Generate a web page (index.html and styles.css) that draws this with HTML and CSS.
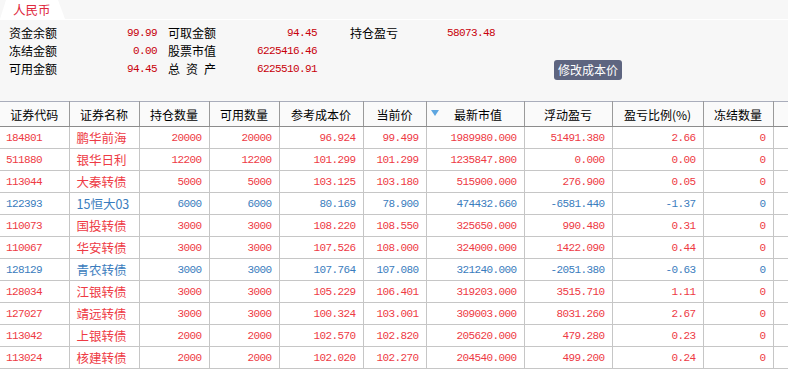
FILE: index.html
```html
<!DOCTYPE html>
<html lang="zh-CN">
<head>
<meta charset="utf-8">
<title>人民币</title>
<link rel="stylesheet" href="styles.css">
</head>
<body>
<div class="panel">
  <div class="tabbar"><div class="tab">人民币</div></div>
  <div class="summary">
    <span class="lbl">资金余额</span><span class="val">99.99</span>
    <span class="lbl l2">可取金额</span><span class="val">94.45</span>
    <span class="lbl l3">持仓盈亏</span><span class="val left">58073.48</span><span></span>
    <span class="lbl">冻结金额</span><span class="val">0.00</span>
    <span class="lbl l2">股票市值</span><span class="val">6225416.46</span>
    <span></span><span></span><span></span>
    <span class="lbl">可用金额</span><span class="val">94.45</span>
    <span class="lbl l2"><span class="spread">总 资 产</span></span><span class="val">6225510.91</span>
    <span></span><span></span><button class="btn">修改成本价</button>
  </div>
</div>
<table class="grid">
  <colgroup>
    <col class="c1"><col class="c2"><col class="c3"><col class="c4"><col class="c5">
    <col class="c6"><col class="c7"><col class="c8"><col class="c9"><col class="c10"><col>
  </colgroup>
  <thead>
    <tr>
      <th>证券代码</th><th>证券名称</th><th>持仓数量</th><th>可用数量</th><th>参考成本价</th>
      <th>当前价</th><th class="sorted"><span class="tri"></span>最新市值</th><th>浮动盈亏</th><th>盈亏比例(%)</th><th>冻结数量</th><th class="fill"></th>
    </tr>
  </thead>
  <tbody>
    <tr class="up"><td class="code">184801</td><td class="name">鹏华前海</td><td>20000</td><td>20000</td><td>96.924</td><td>99.499</td><td>1989980.000</td><td>51491.380</td><td>2.66</td><td>0</td><td class="fill"></td></tr>
    <tr class="up"><td class="code">511880</td><td class="name">银华日利</td><td>12200</td><td>12200</td><td>101.299</td><td>101.299</td><td>1235847.800</td><td>0.000</td><td>0.00</td><td>0</td><td class="fill"></td></tr>
    <tr class="up"><td class="code">113044</td><td class="name">大秦转债</td><td>5000</td><td>5000</td><td>103.125</td><td>103.180</td><td>515900.000</td><td>276.900</td><td>0.05</td><td>0</td><td class="fill"></td></tr>
    <tr class="down"><td class="code">122393</td><td class="name">15恒大03</td><td>6000</td><td>6000</td><td>80.169</td><td>78.900</td><td>474432.660</td><td>-6581.440</td><td>-1.37</td><td>0</td><td class="fill"></td></tr>
    <tr class="up"><td class="code">110073</td><td class="name">国投转债</td><td>3000</td><td>3000</td><td>108.220</td><td>108.550</td><td>325650.000</td><td>990.480</td><td>0.31</td><td>0</td><td class="fill"></td></tr>
    <tr class="up"><td class="code">110067</td><td class="name">华安转债</td><td>3000</td><td>3000</td><td>107.526</td><td>108.000</td><td>324000.000</td><td>1422.090</td><td>0.44</td><td>0</td><td class="fill"></td></tr>
    <tr class="down"><td class="code">128129</td><td class="name">青农转债</td><td>3000</td><td>3000</td><td>107.764</td><td>107.080</td><td>321240.000</td><td>-2051.380</td><td>-0.63</td><td>0</td><td class="fill"></td></tr>
    <tr class="up"><td class="code">128034</td><td class="name">江银转债</td><td>3000</td><td>3000</td><td>105.229</td><td>106.401</td><td>319203.000</td><td>3515.710</td><td>1.11</td><td>0</td><td class="fill"></td></tr>
    <tr class="up"><td class="code">127027</td><td class="name">靖远转债</td><td>3000</td><td>3000</td><td>100.324</td><td>103.001</td><td>309003.000</td><td>8031.260</td><td>2.67</td><td>0</td><td class="fill"></td></tr>
    <tr class="up"><td class="code">113042</td><td class="name">上银转债</td><td>2000</td><td>2000</td><td>102.570</td><td>102.820</td><td>205620.000</td><td>479.280</td><td>0.23</td><td>0</td><td class="fill"></td></tr>
    <tr class="up"><td class="code">113024</td><td class="name">核建转债</td><td>2000</td><td>2000</td><td>102.020</td><td>102.270</td><td>204540.000</td><td>499.200</td><td>0.24</td><td>0</td><td class="fill"></td></tr>
  </tbody>
</table>
</body>
</html>
```
FILE: styles.css
```css
html, body {
  margin: 0;
  padding: 0;
  background: #ffffff;
  font-family: "Noto Sans CJK SC", "Noto Sans", sans-serif;
  font-size: 12px;
  color: #000;
}

.panel {
  height: 101px;
  background: #f7f7f7;
}

.tabbar {
  height: 19px;
  border-bottom: 1px solid #ffffff;
}

.tab {
  width: 65px;
  height: 19px;
  background: #ffffff;
  clip-path: polygon(6px 0, 58px 0, 65px 19px, 0 19px);
  color: #e0283c;
  font-size: 12.5px;
  line-height: 19px;
  padding-left: 13px;
  box-sizing: border-box;
}

.summary {
  display: grid;
  grid-template-columns: 48px 100px 59px 101px 130px 107px auto;
  grid-auto-rows: 18px;
  padding: 4px 0 0 9px;
  line-height: 18px;
}

.lbl { white-space: nowrap; }
.l2 { padding-left: 11px; }
.l3 { padding-left: 33px; }

.val {
  font-family: "Liberation Mono", monospace;
  font-size: 11px;
  letter-spacing: -0.6px;
  color: #c8000a;
  text-align: right;
}

.val.left { text-align: left; }

.spread {
  display: block;
  width: 48px;
  text-align: justify;
  text-align-last: justify;
}

.btn {
  justify-self: start;
  align-self: start;
  height: 20px;
  padding: 0 4px;
  border: none;
  border-radius: 3px;
  background: #5e6580;
  color: #ffffff;
  font-family: "Noto Sans CJK SC", sans-serif;
  font-size: 12px;
  line-height: 20px;
}

.grid {
  width: 788px;
  table-layout: fixed;
  border-collapse: collapse;
  border-spacing: 0;
}

.c1 { width: 69px; }
.c2 { width: 70px; }
.c3 { width: 70px; }
.c4 { width: 70px; }
.c5 { width: 84px; }
.c6 { width: 63px; }
.c7 { width: 98px; }
.c8 { width: 88px; }
.c9 { width: 91px; }
.c10 { width: 70px; }

.grid th {
  height: 24px;
  padding: 0;
  background: #fafafa;
  border-top: 1px solid #a9adbb;
  border-bottom: 1px solid #8c8c8c;
  border-right: 1px solid #9a9a9a;
  font-weight: normal;
  font-size: 12px;
  text-align: center;
  white-space: nowrap;
  color: #000;
}

.grid th.fill { border-right: none; }

.grid th.sorted {
  position: relative;
  padding-left: 6px;
}

.tri {
  position: absolute;
  left: 4px;
  top: 8px;
  width: 0;
  height: 0;
  border-left: 4px solid transparent;
  border-right: 4px solid transparent;
  border-top: 6px solid #5ea6e0;
}

.grid td {
  height: 21px;
  padding: 0 7px 0 6px;
  border-right: 1px solid #c6c6c6;
  border-bottom: 1px solid #c6c6c6;
  font-family: "Liberation Mono", monospace;
  font-size: 11px;
  letter-spacing: -0.6px;
  text-align: right;
  white-space: nowrap;
  overflow: hidden;
}

.grid td.code { text-align: left; }

.grid td.name {
  font-family: "Noto Sans CJK SC", sans-serif;
  font-size: 12.5px;
  letter-spacing: 0;
  text-align: left;
  padding-left: 7px;
}

.grid td.fill { border-right: none; }

.up td { color: #ee3a44; }
.down td { color: #3a7cbd; }
```
